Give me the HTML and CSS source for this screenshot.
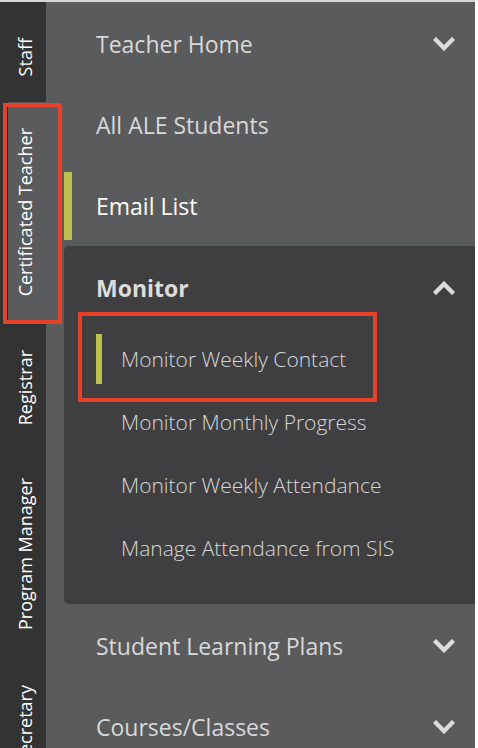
FILE: index.html
```html
<!DOCTYPE html>
<html>
<head>
<meta charset="utf-8">
<link rel="stylesheet" href="styles.css">
</head>
<body>
<div class="app">
  <nav class="tabs">
    <div class="tab tab-staff"><span>Staff</span></div>
    <div class="tab tab-active"><span>Certificated Teacher</span></div>
    <div class="tab tab-registrar"><span>Registrar</span></div>
    <div class="tab tab-pm"><span>Program Manager</span></div>
    <div class="tab tab-sec"><span>Secretary</span></div>
  </nav>
  <div class="menu">
    <div class="item">
      <span class="bar"></span><span class="label">Teacher Home</span>
      <svg class="chev" viewBox="0 0 22 14"><path d="M3 3 L11 11 L19 3" /></svg>
    </div>
    <div class="item">
      <span class="bar"></span><span class="label">All ALE Students</span>
    </div>
    <div class="item item-active">
      <span class="bar"></span><span class="label">Email List</span>
    </div>
    <div class="submenu">
      <div class="sub-head">
        <span class="sub-title">Monitor</span>
        <svg class="chev" viewBox="0 0 22 14"><path d="M3 11 L11 3 L19 11" /></svg>
      </div>
      <div class="sub-list">
        <div class="sub-item sub-active"><span class="sbar"></span><span>Monitor Weekly Contact</span></div>
        <div class="sub-item"><span class="sbar"></span><span>Monitor Monthly Progress</span></div>
        <div class="sub-item"><span class="sbar"></span><span>Monitor Weekly Attendance</span></div>
        <div class="sub-item"><span class="sbar"></span><span>Manage Attendance from SIS</span></div>
      </div>
    </div>
    <div class="item item-after">
      <span class="bar"></span><span class="label">Student Learning Plans</span>
      <svg class="chev" viewBox="0 0 22 14"><path d="M3 3 L11 11 L19 3" /></svg>
    </div>
    <div class="item">
      <span class="bar"></span><span class="label">Courses/Classes</span>
      <svg class="chev" viewBox="0 0 22 14"><path d="M3 3 L11 11 L19 3" /></svg>
    </div>
  </div>
  <div class="mark mark-tab"></div>
  <div class="mark mark-sub"></div>
</div>
</body>
</html>
```
FILE: styles.css
```css
* { box-sizing: border-box; }
html, body { margin: 0; padding: 0; }
body {
  background: #ffffff;
  font-family: "Open Sans", "Noto Sans", sans-serif;
  width: 478px;
  height: 748px;
  overflow: hidden;
}
.app {
  position: relative;
  display: flex;
  width: 475px;
  height: 748px;
  border-top: 2px solid #d6d6d6;
  overflow: hidden;
}
.tabs {
  width: 46px;
  flex: none;
  background: #333333;
  display: flex;
  flex-direction: column;
}
.tab {
  flex: none;
  display: flex;
  justify-content: center;
  align-items: center;
  color: #ffffff;
  font-size: 18px;
  font-weight: 500;
  padding: 0 0 0 4px;
}
.tab span {
  writing-mode: vertical-rl;
  transform: rotate(180deg);
  line-height: 22px;
  white-space: nowrap;
}
.tab-staff { height: 100px; padding-top: 10px; }
.tab-active {
  background: #5a5b5d;
  margin-left: 8px;
  height: 220px;
  padding: 0 4px 0 0;
  box-shadow: -2px 2px 2px rgba(0,0,0,0.25);
}
.tab-registrar { height: 132px; }
.tab-pm { height: 200px; }
.tab-sec { padding-top: 31px; align-items: flex-start; height: 140px; }

.menu {
  flex: 1;
  background: #5a5b5d;
  display: flex;
  flex-direction: column;
  padding-top: 8px;
}
.item {
  height: 68px;
  flex: none;
  display: flex;
  align-items: center;
  margin-bottom: 13px;
  padding-right: 20px;
  color: #d9d9d9;
  font-size: 23px;
}
.bar {
  width: 8px;
  align-self: stretch;
  margin-left: 18px;
  margin-right: 24px;
}
.item-active { color: #ffffff; margin-bottom: 6px; }
.item-active .bar { background: #bcc04f; }
.label { flex: 1; white-space: nowrap; }
.chev {
  width: 22px;
  height: 14px;
  flex: none;
}
.chev path {
  fill: none;
  stroke: #dcdcdc;
  stroke-width: 4.4;
  stroke-linecap: square;
  stroke-linejoin: miter;
}
.submenu {
  margin-left: 18px;
  background: #3f3f41;
  border-radius: 5px 0 0 5px;
  height: 358px;
  flex: none;
  padding-top: 12px;
}
.sub-head {
  height: 60px;
  display: flex;
  align-items: center;
  padding-left: 32px;
  padding-right: 20px;
}
.sub-title {
  flex: 1;
  color: #dcdcdc;
  font-size: 23px;
  font-weight: 700;
}
.sub-list {
  display: flex;
  flex-direction: column;
  gap: 13px;
  margin-top: 16px;
}
.sub-item {
  height: 50px;
  display: flex;
  align-items: center;
  padding-left: 32px;
  color: #d6d6d6;
  font-size: 21px;
  font-weight: 300;
}
.sbar {
  width: 6px;
  align-self: stretch;
  margin-right: 19px;
}
.sub-active .sbar { background: #bcc04f; }
.item-after { margin-top: 8px; }

.mark {
  position: absolute;
  border: 4px solid #e8412a;
  pointer-events: none;
}
.mark-tab { left: 3px; top: 101px; width: 59px; height: 221px; }
.mark-sub { left: 78px; top: 310px; width: 299px; height: 90px; }
```
